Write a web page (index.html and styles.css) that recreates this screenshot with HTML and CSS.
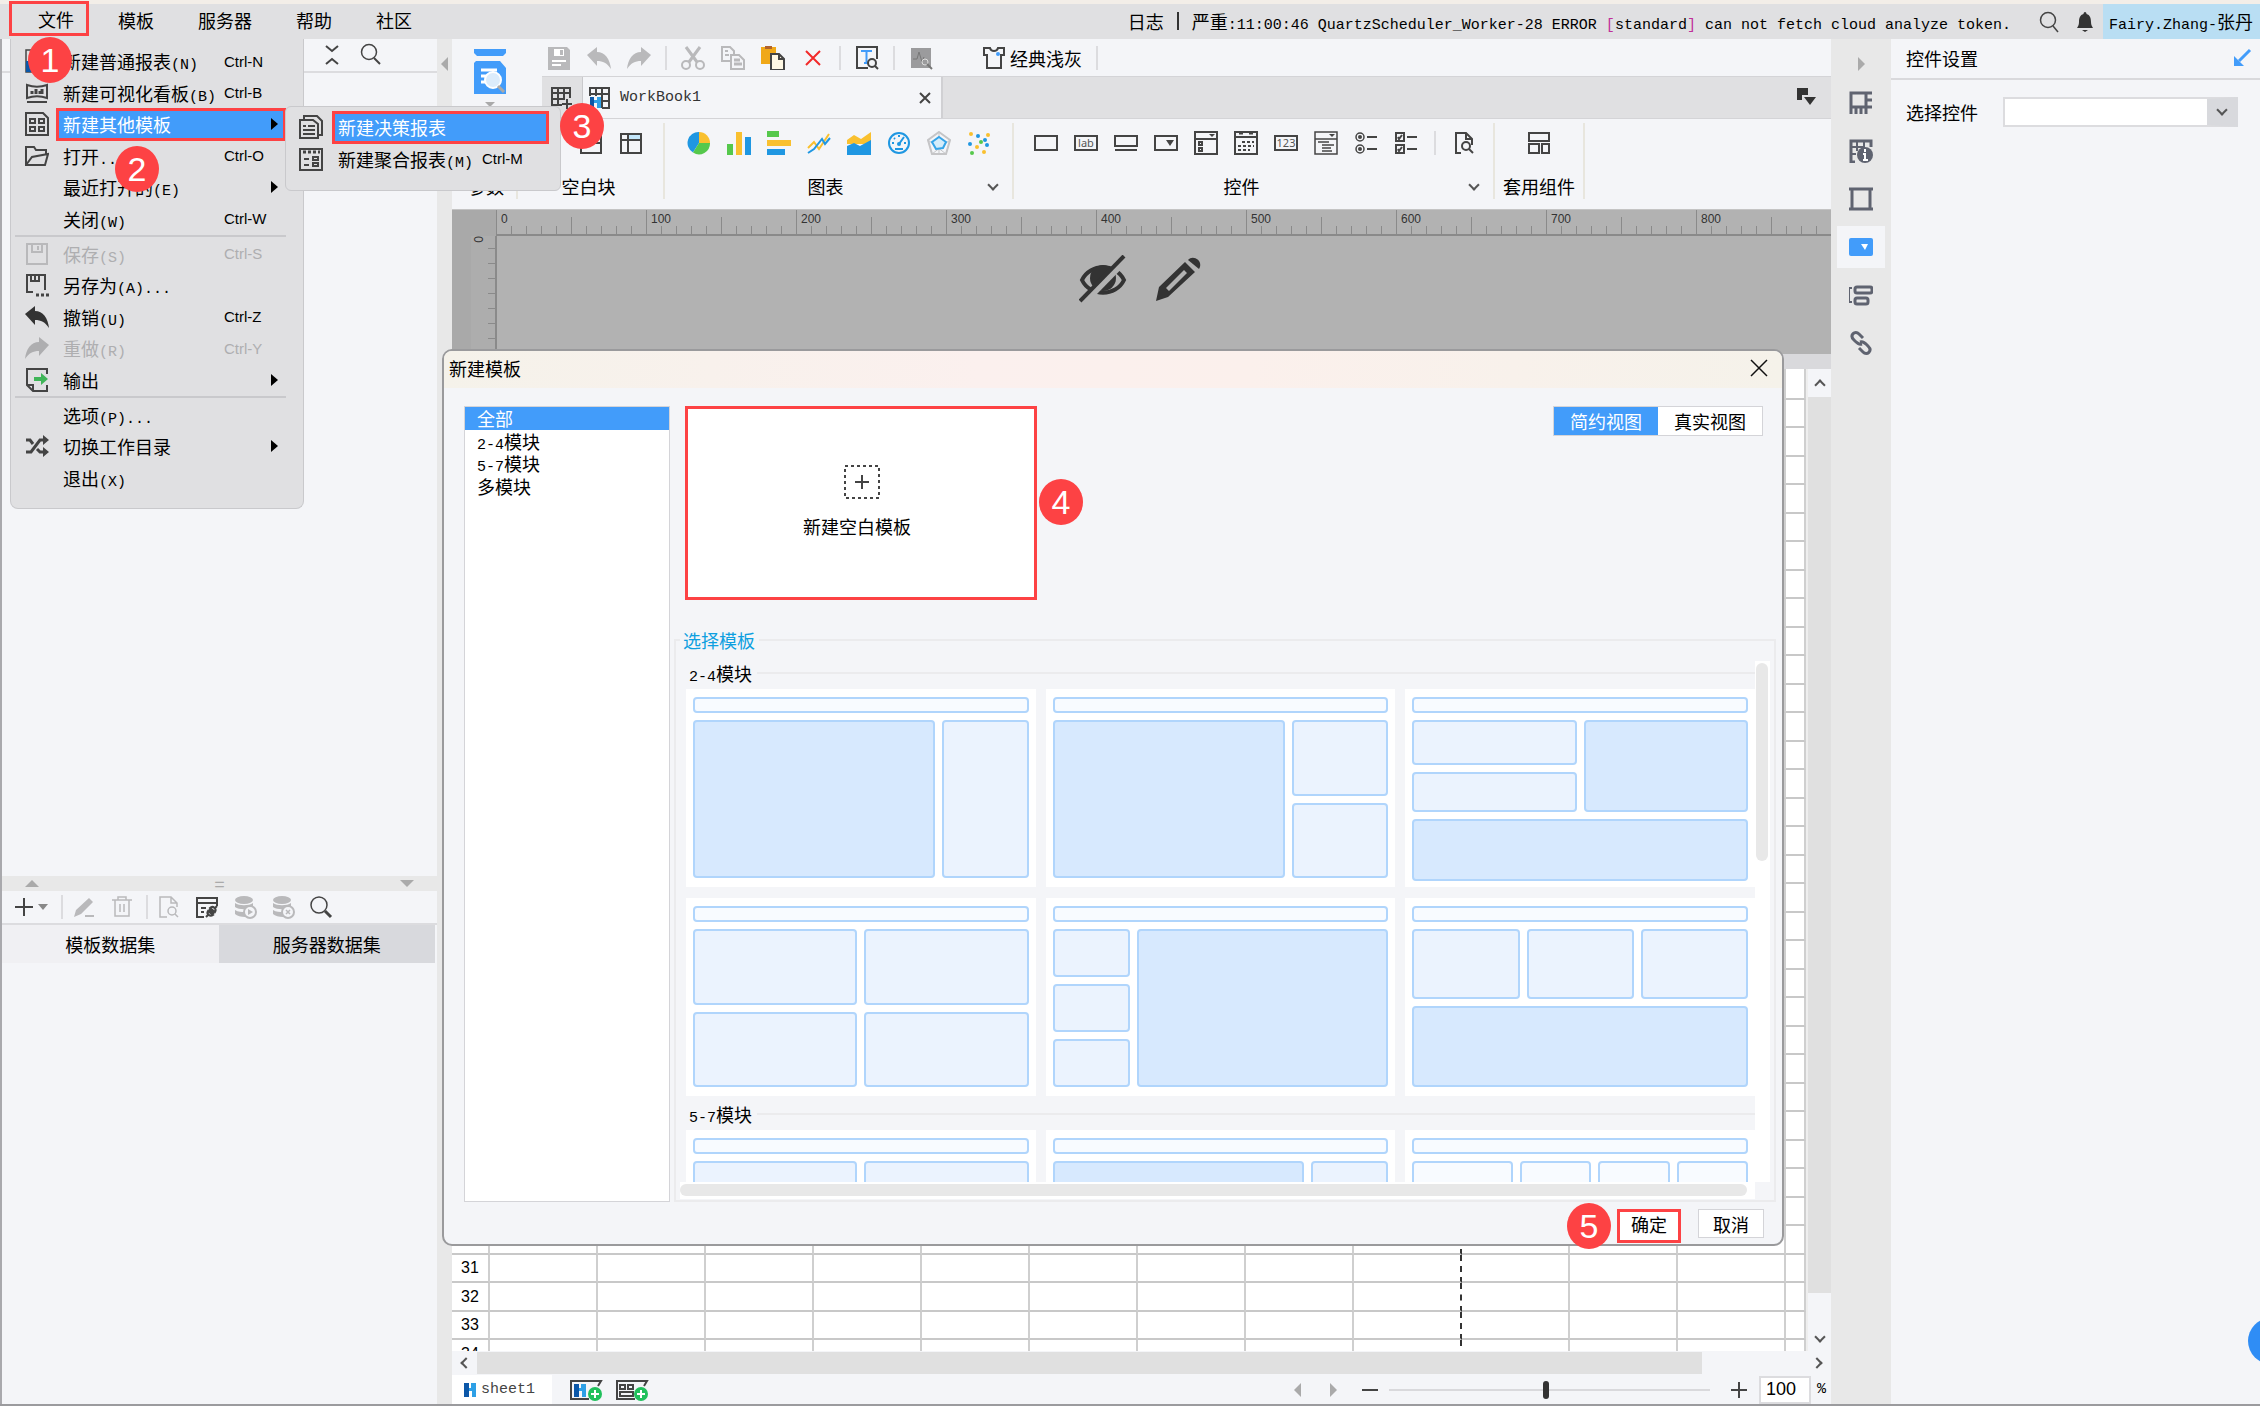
FILE: index.html
```html
<!DOCTYPE html>
<html lang="zh-CN">
<head>
  <meta charset="UTF-8" />
  <meta name="viewport" content="width=device-width, initial-scale=1.0"/>
  <title>WorkBook1</title>
  <link rel="stylesheet" href="styles.css">
</head>
<body>
  <header class="menubar">
    <nav class="menus">
      <button class="menu-open">文件</button>
      <button>模板</button>
      <button>服务器</button>
      <button>帮助</button>
      <button>社区</button>
    </nav>
    <div class="log">
      <span>日志</span>
      <span class="bar"></span>
      <span>严重<span class="mono">:11:00:46 QuartzScheduler_Worker-28 ERROR <span class="br">[</span>standard<span class="br">]</span> can not fetch cloud analyze token.</span></span>
    </div>
    <button class="plain" aria-label="搜索"><svg class="icon" viewBox="0 0 24 24"><circle cx="11" cy="10" r="7.5" class="l"/><path d="M16 16l5 6" class="l"/></svg></button>
    <button class="plain bell" aria-label="通知"><svg class="icon" viewBox="0 0 24 24"><path d="M12 2c1 0 1.500 1 1.500 2C17 5 18 8 18 12c0 3 1 4 2 6H4c1-2 2-3 2-6 0-4 1-7 4.500-8 0-1 .5-2 1.500-2z" fill="#333"/><path d="M9 20h6l-3 2z" fill="#333"/></svg></button>
    <button class="user"><span class="mono">Fairy.Zhang-</span>张丹</button>
  </header>

  <main class="workspace">
    <aside class="left">
      <div class="left-tools">
        <svg class="icon" viewBox="0 0 24 24"><path d="M6 3l6 5 6-5M6 21l6-5 6 5" class="l w2"/></svg>
        <svg class="icon" viewBox="0 0 24 24"><circle cx="10" cy="9" r="7.500" class="l"/><path d="M15 15l6 6" class="l w2"/></svg>
      </div>
      <div class="tree"></div>
      <div class="hsplit"><i class="tri up"></i><span>=</span><i class="tri down"></i></div>
      <div class="data-tools">
        <svg class="icon add" viewBox="0 0 36 24"><path d="M2 12h18M11 3v18" class="l w2"/><path d="M25 9h10l-5 6z" fill="#888"/></svg>
        <i class="sep"></i>
        <svg class="icon dim" viewBox="0 0 24 24"><path d="M2 22l2-7L17 3l4 4L9 19zM13 20h9v2h-9z" fill="#b9b9bb"/></svg>
        <svg class="icon dim" viewBox="0 0 24 24"><path d="M2 5h20M8 5V2h8v3M5 5v16h14V5M10 9v8M14 9v8" class="l"/></svg>
        <i class="sep"></i>
        <svg class="icon dim" viewBox="0 0 24 24"><path d="M10 22H3V2h11l6 6v4M14 2v6h6" class="l"/><circle cx="15" cy="16" r="4" class="l"/><path d="M18 19l3 3" class="l"/></svg>
        <svg class="icon" viewBox="0 0 24 24"><path d="M9 22H2V3h20v8M2 8h20M6 13h5M6 17h3" class="l w2"/><path d="M11 22l3-3M22 11l-3 3M14 14l5 5M15 13c3-3 7 1 5 4zM13 16c-2 3 2 6 5 4z" class="l w2"/></svg>
        <svg class="icon dim" viewBox="0 0 24 24"><ellipse cx="11" cy="5" rx="9" ry="4" fill="#b9b9bb"/><path d="M2 8c4 3 14 3 18 0v4c-4 3-14 3-18 0zM2 15c3 2 7 2 10 2v5c-4 0-8-1-10-3z" fill="#b9b9bb"/><circle cx="17" cy="17" r="6" fill="#f4f5f8" stroke="#b9b9bb" stroke-width="2"/><path d="M15 14l5 3-5 3z" fill="#b9b9bb"/></svg>
        <svg class="icon dim" viewBox="0 0 24 24"><ellipse cx="11" cy="5" rx="9" ry="4" fill="#b9b9bb"/><path d="M2 8c4 3 14 3 18 0v4c-4 3-14 3-18 0zM2 15c3 2 7 2 10 2v5c-4 0-8-1-10-3z" fill="#b9b9bb"/><circle cx="17" cy="17" r="6" fill="#f4f5f8" stroke="#b9b9bb" stroke-width="2"/><path d="M15 15l4 4M19 15l-4 4" class="l"/></svg>
        <svg class="icon" viewBox="0 0 24 24"><circle cx="10" cy="10" r="8" class="l"/><path d="M16 16l6 6" class="l w3"/></svg>
      </div>
      <div class="data-tabs">
        <button class="on">模板数据集</button>
        <button>服务器数据集</button>
      </div>
      <div class="data-list"></div>
    </aside>

    <div class="vsplit"><i class="tri left-tri"></i></div>

    <section class="center">
      <div class="top">
        <div class="preview">
          <svg viewBox="0 0 32 58"><path d="M0 0h32v4l-3 3H3L0 4z" fill="#429cfa"/><path d="M2 12h24l6 7v26H0V14z" fill="#429cfa"/><path d="M7 21h16M7 27h8M7 33h7" stroke="#fff" stroke-width="3"/><circle cx="19" cy="31" r="8" fill="#dcecfb" stroke="#fff" stroke-width="2"/><path d="M24 37l6 6" stroke="#aaa" stroke-width="3"/><path d="M11 53h10l-5 5z" fill="#aaa"/></svg>
        </div>
        <div class="top-rows">
          <div class="toolbar">
            <svg class="icon" viewBox="0 0 24 24"><path d="M1 1h19l3 3v20H1z" fill="#b9b9bb"/><path d="M7 3h10v7H7z" fill="#fff"/><path d="M13 4h3v5h-3z" fill="#b9b9bb"/><path d="M5 15h14M5 19h9" stroke="#fff" stroke-width="2"/></svg>
            <svg class="icon" viewBox="0 0 24 24"><path d="M0 9L10 1v5c8 0 13 7 14 17-4-6-8-8-14-8v5z" fill="#b9b9bb"/></svg>
            <svg class="icon" viewBox="0 0 24 24"><path d="M24 9L14 1v5C6 6 1 13 0 23c4-6 8-8 14-8v5z" fill="#b9b9bb"/></svg>
            <i class="sep"></i>
            <svg class="icon dim" viewBox="0 0 24 24"><path d="M5 1l11 15M19 1L8 16" class="l w3"/><circle cx="5" cy="19" r="4" class="l w2"/><circle cx="19" cy="19" r="4" class="l w2"/></svg>
            <svg class="icon dim" viewBox="0 0 24 24"><path d="M9 15H1V1h8l4 4v3M4 5h3M4 9h4" class="l w2"/><path d="M10 9h8l5 5v9H10z" class="l w2"/><path d="M13 14h6M13 18h8" class="l w3"/></svg>
            <svg class="icon" viewBox="0 0 24 24"><path d="M0 1h15v8H9v9H0z" fill="#f0a818"/><path d="M4 0h7v3H4z" fill="#b0622c"/><path d="M10 8h8l5 5v11H10z" fill="#fff8e4" stroke="#444" stroke-width="2"/><path d="M18 8v5h5" fill="none" stroke="#444" stroke-width="2"/></svg>
            <svg class="icon" viewBox="0 0 24 24"><path d="M5 5l14 14M19 5L5 19" stroke="#f22a2a" stroke-width="2"/></svg>
            <i class="sep"></i>
            <svg class="icon" viewBox="0 0 24 24"><path d="M13 22H2V1h20v12" class="l w2"/><path d="M6 5h11M11.500 5v12M9 17h5" stroke="#429cfa" stroke-width="2"/><circle cx="17" cy="17" r="4" class="l w2"/><path d="M20 20l3 3" class="l w2"/></svg>
            <i class="sep"></i>
            <svg class="icon" viewBox="0 0 24 24"><path d="M2 2h20v20H2z" fill="#9b9b9d"/><path d="M4 13h4l2-7 3 10 2-5" fill="none" stroke="#777"/><circle cx="16" cy="16" r="3" fill="none" stroke="#ddd"/><path d="M18 18l5 5" stroke="#777" stroke-width="2"/></svg>
            <button class="theme"><svg class="icon" viewBox="0 0 24 24"><path d="M2 2h6c1 4 7 4 8 0h6v7h-3v13H5V9H2z" class="l w2"/><circle cx="16" cy="8" r="2" fill="#429cfa"/></svg>经典浅灰</button>
            <i class="sep"></i>
          </div>
          <div class="tabs">
            <button class="new-tab" aria-label="新建"><svg class="icon" viewBox="0 0 24 24"><path d="M13 19H3V2h18v10M3 7h18M3 13h13M9 2v17M15 2v12M13 18h10M18 13v10" class="l w2"/></svg></button>
            <div class="tab">
              <svg class="icon" viewBox="0 0 24 24"><path d="M2 10V2h19v20h-7M2 8h19M8 2v8M14 2v20M14 15h7" class="l w2"/><path d="M2 11h4v11H2z" fill="#0b57a8"/><path d="M6 14h3v-3h4v11H9v-5H6z" fill="#2ea0e6"/></svg>
              <span class="mono">WorkBook1</span>
              <button class="plain" aria-label="关闭"><svg class="icon" viewBox="0 0 24 24"><path d="M7 7l10 10M17 7L7 17" class="l w2"/></svg></button>
            </div>
            <svg class="icon tab-list" viewBox="0 0 24 24"><path d="M3 3h11v7H8v5H3z" fill="#333"/><path d="M10 12h12l-6 8z" fill="#333"/></svg>
          </div>
        </div>
      </div>

      <div class="ribbon">
        <div class="group g-param"><div class="icons"></div><div class="name">参数</div></div>
        <div class="group g-blank">
          <div class="icons">
            <svg class="icon" viewBox="0 0 24 24"><path d="M2 2h20v20H2zM2 12h20" class="l w2"/></svg>
            <svg class="icon" viewBox="0 0 24 24"><path d="M9 4h12v6H9z" fill="#c3e6fa"/><path d="M2 3h20v19H2zM2 9h20M9 3v19" class="l w2"/></svg>
          </div>
          <div class="name">空白块</div>
        </div>
        <div class="group g-chart">
          <div class="icons">
            <svg class="icon" viewBox="0 0 24 24"><path d="M12 12V1A11 11 0 0 0 6 21.500z" fill="#1f97e2"/><path d="M12 12V1a11 11 0 0 1 11 11z" fill="#f9c02f"/><path d="M12 12h11A11 11 0 0 1 6 21.500z" fill="#55c84c"/></svg>
            <svg class="icon" viewBox="0 0 24 24"><path d="M0 13h6v11H0z" fill="#55c84c"/><path d="M9 1h6v23H9z" fill="#f9c02f"/><path d="M18 6h6v18h-6z" fill="#1f97e2"/></svg>
            <svg class="icon" viewBox="0 0 24 24"><path d="M0 0h12v6H0z" fill="#55c84c"/><path d="M0 9h24v6H0z" fill="#f9c02f"/><path d="M0 18h18v6H0z" fill="#1f97e2"/></svg>
            <svg class="icon" viewBox="0 0 24 24"><path d="M1 17l6-6 5 7L22 3" fill="none" stroke="#f9c02f" stroke-width="2"/><path d="M1 22l6-4 8-10 3 5 5-6" fill="none" stroke="#1f97e2" stroke-width="2"/></svg>
            <svg class="icon" viewBox="0 0 24 24"><path d="M0 9l7-5 7 4 10-7v12H0z" fill="#f9c02f"/><path d="M0 15l7-3 6 3 11-6v15H0z" fill="#1f97e2"/></svg>
            <svg class="icon" viewBox="0 0 24 24"><circle cx="12" cy="12" r="10" fill="none" stroke="#1f97e2" stroke-width="2"/><path d="M12 13l5-7M5 12h2M17 12h2M12 4v2M7 7l1 1M8 18h8" stroke="#1f97e2" stroke-width="2"/><circle cx="12" cy="13" r="2" fill="#1f97e2"/></svg>
            <svg class="icon" viewBox="0 0 24 24"><path d="M12 1l11 8-4 14H5L1 9zM12 1v22M1 9l18 14M23 9L5 23" fill="none" stroke="#c5c5c7"/><path d="M12 1l11 8-4 14H5L1 9z" fill="none" stroke="#c5c5c7" stroke-width="2"/><path d="M12 6l7 5-3 6-7 1-4-7z" fill="#d4ecfa" stroke="#35a4e8" stroke-width="2"/></svg>
            <svg class="icon" viewBox="0 0 24 24"><g fill="#f9c02f"><circle cx="4" cy="3" r="2"/><circle cx="21" cy="4" r="2"/><circle cx="10" cy="16" r="2"/><circle cx="17" cy="21" r="2"/></g><g fill="#1f97e2"><circle cx="11" cy="5" r="2"/><circle cx="18" cy="9" r="2"/><circle cx="3" cy="13" r="2"/><circle cx="20" cy="14" r="2"/></g><g fill="#55c84c"><circle cx="14" cy="11" r="2"/><circle cx="5" cy="22" r="2"/></g></svg>
          </div>
          <div class="name">图表<i class="chev"></i></div>
        </div>
        <div class="group g-widget">
          <div class="icons">
            <svg class="icon" viewBox="0 0 24 24"><path d="M1 5h22v14H1z" class="l w2"/></svg>
            <svg class="icon" viewBox="0 0 24 24"><path d="M1 5h22v14H1z" class="l w2"/><text x="12" y="16" class="t">lab</text></svg>
            <svg class="icon" viewBox="0 0 24 24"><path d="M1 5h22v10H1zM1 19h22" class="l w2"/></svg>
            <svg class="icon" viewBox="0 0 24 24"><path d="M1 5h22v14H1z" class="l w2"/><path d="M12 9h8l-4 6z" fill="#444"/></svg>
            <svg class="icon" viewBox="0 0 24 24"><path d="M1 1h22v22H1zM1 8h22M5 11h3v3H5zM5 17h3v3H5z" class="l w2"/><path d="M15 3h6l-3 3z" fill="#444"/></svg>
            <svg class="icon" viewBox="0 0 24 24"><path d="M1 1h22v22H1zM1 6h22" class="l w2"/><path d="M5 2h4M15 2h4" class="l w3"/><path d="M8 11h12M4 15h16M4 19h12" class="l w2" stroke-dasharray="3 2"/></svg>
            <svg class="icon" viewBox="0 0 24 24"><path d="M1 5h22v14H1z" class="l w2"/><text x="12" y="16" class="t">123</text></svg>
            <svg class="icon" viewBox="0 0 24 24"><path d="M1 1h22v22H1zM1 8h22M4 11h11M8 14h12M8 17h9M8 20h10" class="l"/><path d="M15 3h6l-3 3z" fill="#444"/></svg>
            <svg class="icon" viewBox="0 0 24 24"><circle cx="6" cy="6" r="4" class="l"/><circle cx="6" cy="6" r="2" fill="#444"/><circle cx="6" cy="18" r="4" class="l"/><circle cx="6" cy="18" r="2" fill="#444"/><path d="M13 6h10M13 18h10" class="l w2"/></svg>
            <svg class="icon" viewBox="0 0 24 24"><path d="M2 2h8v8H2zM2 14h8v8H2zM4 6l1 2 3-4M4 18l1 2 3-4M13 6h10M13 18h10" class="l w2"/></svg>
            <i class="sep"></i>
            <svg class="icon" viewBox="0 0 24 24"><path d="M9 22H4V2h10l6 6v6M14 2v6h6" class="l w2"/><circle cx="14" cy="15" r="4" class="l w2"/><path d="M17 18l4 4" class="l w2"/></svg>
          </div>
          <div class="name">控件<i class="chev"></i></div>
        </div>
        <div class="group g-suite">
          <div class="icons"><svg class="icon" viewBox="0 0 24 24"><path d="M2 2h20v8H2zM2 13h10v9H2zM15 13h7v9h-7z" class="l w2"/></svg></div>
          <div class="name">套用组件</div>
        </div>
      </div>

      <div class="ruler">
        <div class="ruler-scale"><span>0</span><span>100</span><span>200</span><span>300</span><span>400</span><span>500</span><span>600</span><span>700</span><span>800</span></div>
      </div>
      <div class="canvas">
        <div class="vruler"><span>0</span></div>
        <div class="canvas-icons">
          <svg viewBox="0 0 48 48"><path d="M3 25c8-17 34-17 42 0-8 17-34 17-42 0z" fill="none" stroke="#333" stroke-width="4"/><path d="M24 10a13 13 0 1 1 0 26 13 13 0 1 1 0-26z" fill="#333"/><path d="M5 48L49 3" stroke="#b2b2b2" stroke-width="6"/><path d="M1 46L45 1" stroke="#333" stroke-width="4"/></svg>
          <svg viewBox="0 0 48 48"><path d="M2 46l3-14L31 7l10 10-27 25zM12 33l3 3 18-18-3-3z" fill="#333" fill-rule="evenodd"/><path d="M34 5c5-6 16 1 11 9z" fill="#333"/></svg>
        </div>
      </div>
      <div class="sheet">
        <div class="grid-wrap"><table class="grid"><colgroup id="cols"></colgroup><tbody id="rows"></tbody></table></div>
        <div class="vscroll"><i class="chev up-chev"></i><div class="thumb"></div><i class="chev"></i></div>
      </div>
      <div class="hscroll"><i class="chev l-chev"></i><div class="thumb"></div><i class="chev r-chev"></i></div>
      <footer class="status">
        <button class="sheet-tab"><svg viewBox="0 0 14 14"><path d="M1 0h5v14H1z" fill="#0b57a8"/><path d="M6 5h2V0h5v14H9V8H6z" fill="#2ea0e6"/></svg><span class="mono">sheet1</span></button>
        <svg class="add-sheet" viewBox="0 0 34 24"><path d="M20 21H2V3h30l-3 5" class="l w2"/><path d="M5 6h5v13H5z" fill="#0b57a8"/><path d="M10 10h2V6h5v13h-4v-6h-3z" fill="#2ea0e6"/><circle cx="26" cy="16" r="7" fill="#21c05c"/><path d="M22 16h8M26 12v8" stroke="#fff" stroke-width="2"/></svg>
        <svg class="add-sheet" viewBox="0 0 34 24"><path d="M20 21H2V3h30l-3 5M5 7h5v4H5zM13 7h5v4h-5zM5 14h13v4H5z" class="l w2"/><circle cx="26" cy="16" r="7" fill="#21c05c"/><path d="M22 16h8M26 12v8" stroke="#fff" stroke-width="2"/></svg>
        <div class="zoom">
          <i class="tri left-tri"></i><i class="tri right-tri"></i>
          <button class="plain" aria-label="缩小"><svg class="icon" viewBox="0 0 24 24"><path d="M4 12h16" class="l w2"/></svg></button>
          <input type="range" min="0" max="100" value="49" aria-label="缩放">
          <button class="plain" aria-label="放大"><svg class="icon" viewBox="0 0 24 24"><path d="M4 12h16M12 4v16" class="l w2"/></svg></button>
          <input type="text" value="100" id="zoom"><label for="zoom" class="mono">%</label>
        </div>
      </footer>
    </section>

    <nav class="rail">
      <i class="tri right-tri"></i>
      <button aria-label="单元格元素"><svg class="icon" viewBox="0 0 24 24"><path d="M2 23V2h21M2 16h21M17 2v21M17 9h6M7 16v7M12 16v7" class="r"/></svg></button>
      <button aria-label="单元格属性"><svg class="icon" viewBox="0 0 24 24"><path d="M6 23H2V2h20v6" class="r"/><path d="M1 8h15M8 2v10M15 2v6M1 15h6" class="r w2"/><circle cx="16" cy="16" r="8" fill="#5f6370"/><path d="M16 10v3M14 15h2v6M14 21h5" stroke="#fff" stroke-width="2" fill="none"/></svg></button>
      <button aria-label="悬浮元素"><svg class="icon" viewBox="0 0 24 24"><path d="M3 2h18v20H3zM0 2h4M20 2h4M0 22h4M20 22h4" class="r"/></svg></button>
      <button class="on" aria-label="控件设置"><svg class="icon" viewBox="0 0 24 24"><rect x="0" y="3" width="24" height="18" rx="2" fill="#429cfa"/><path d="M12 9h7l-3 6z" fill="#fff"/></svg></button>
      <button aria-label="条件属性"><svg class="icon" viewBox="0 0 24 24"><path d="M3 5H0v14h3" class="r w2"/><rect x="6" y="4" width="17" height="6" rx="2" class="r"/><rect x="6" y="15" width="13" height="6" rx="2" class="r"/></svg></button>
      <button aria-label="超级链接"><svg class="icon" viewBox="0 0 24 24"><path d="M13 13c-3 1-5-1-8-4-5-5 1-10 5-6l4 4M11 11c3-1 5 1 8 4 5 5-1 10-5 6l-4-4" class="r"/></svg></button>
    </nav>

    <aside class="props">
      <div class="props-head"><span>控件设置</span><svg class="icon" viewBox="0 0 24 24"><path d="M20 4L9 15" stroke="#429cfa" stroke-width="3"/><path d="M4 10v10h10z" fill="#429cfa"/></svg></div>
      <div class="field">
        <label for="widget">选择控件</label>
        <div class="select"><select id="widget"><option></option></select><i class="chev"></i></div>
      </div>
    </aside>
  </main>

  <!-- file menu -->
  <ul class="menu file-menu">
    <li><svg class="icon" viewBox="0 0 24 24"><path d="M1 1h22v22H1z" class="l"/><path d="M1 12h10v11H1z" fill="#0b57a8"/></svg><button class="row"><span>新建普通报表<span class="mono">(N)</span></span><kbd>Ctrl-N</kbd></button></li>
    <li><svg class="icon" viewBox="0 0 24 24"><path d="M2 4c6 2 14 2 20 0v13c-6-2-14-2-20 0zM2 21h20" class="l w2"/><path d="M7 10v3M11 8v5M15 10v3M17 8v5" class="l w3"/></svg><button class="row"><span>新建可视化看板<span class="mono">(B)</span></span><kbd>Ctrl-B</kbd></button></li>
    <li><svg class="icon" viewBox="0 0 24 24"><path d="M1 1h17l5 5v17H1zM5 7h5v4H5zM14 7h5v4h-5zM5 15h5v4H5zM14 15h5v4h-5z" class="l w2"/></svg><button class="row on"><span>新建其他模板</span><i class="tri sub"></i></button></li>
    <li><svg class="icon" viewBox="0 0 24 24"><path d="M1 21V3h8l2 3h10v4M1 21l6-8 16-3-3 11z" class="l w2"/></svg><button class="row"><span>打开<span class="mono">...</span></span><kbd>Ctrl-O</kbd></button></li>
    <li><i class="icon"></i><button class="row"><span>最近打开的<span class="mono">(E)</span></span><i class="tri sub"></i></button></li>
    <li><i class="icon"></i><button class="row"><span>关闭<span class="mono">(W)</span></span><kbd>Ctrl-W</kbd></button></li>
    <li class="rule"></li>
    <li><svg class="icon dim" viewBox="0 0 24 24"><path d="M2 2h20v20H2zM7 2v8h10V2M13 4v4" class="l w2"/></svg><button class="row" disabled><span>保存<span class="mono">(S)</span></span><kbd>Ctrl-S</kbd></button></li>
    <li><svg class="icon" viewBox="0 0 24 24"><path d="M8 19H2V2h18v15M6 2v6h8V2M10 3v4" class="l w2"/><path d="M11 22h3M16 22h3M21 22h3" class="l w3"/></svg><button class="row"><span>另存为<span class="mono">(A)...</span></span></button></li>
    <li><svg class="icon" viewBox="0 0 24 24"><path d="M0 9L10 1v5c8 0 13 7 14 17-4-6-8-8-14-8v5z" fill="#333"/></svg><button class="row"><span>撤销<span class="mono">(U)</span></span><kbd>Ctrl-Z</kbd></button></li>
    <li><svg class="icon" viewBox="0 0 24 24"><path d="M24 9L14 1v5C6 6 1 13 0 23c4-6 8-8 14-8v5z" fill="#aeaeb0"/></svg><button class="row" disabled><span>重做<span class="mono">(R)</span></span><kbd>Ctrl-Y</kbd></button></li>
    <li><svg class="icon" viewBox="0 0 24 24"><path d="M22 6V1H2v16l6 6h14v-6M2 17h6v6" class="l w2"/><path d="M9 9h7V5l7 6-7 6v-4H9z" fill="#3fb558"/></svg><button class="row"><span>输出</span><i class="tri sub"></i></button></li>
    <li class="rule"></li>
    <li><i class="icon"></i><button class="row"><span>选项<span class="mono">(P)...</span></span></button></li>
    <li><svg class="icon" viewBox="0 0 24 24"><path d="M1 6h4l3 4M1 18h5L15 6h4M12 15l3 3h4" class="l w3"/><path d="M18 1l6 5-6 5zM18 13l6 5-6 5z" fill="#444"/></svg><button class="row"><span>切换工作目录</span><i class="tri sub"></i></button></li>
    <li><i class="icon"></i><button class="row"><span>退出<span class="mono">(X)</span></span></button></li>
  </ul>

  <ul class="menu sub-menu">
    <li><svg class="icon" viewBox="0 0 24 24"><path d="M5 4V1h13l5 5v14h-3M1 5h13l5 4v14H1z" class="l w2"/><path d="M4 11h3M9 11h7M4 15h12M4 19h12" class="l w2"/></svg><button class="row on"><span>新建决策报表</span></button></li>
    <li><svg class="icon" viewBox="0 0 24 24"><path d="M1 2h22v21H1z" class="l w2"/><path d="M4 5h17" class="l w3" stroke-dasharray="3 2"/><path d="M5 12h5M5 18h5M14 10h5v3h-5zM14 16h5v3h-5z" class="l w2"/></svg><button class="row"><span>新建聚合报表<span class="mono">(M)</span></span><kbd>Ctrl-M</kbd></button></li>
  </ul>

  <div class="dialog" role="dialog" aria-label="新建模板">
    <div class="dialog-title"><span>新建模板</span><button class="plain" aria-label="关闭"><svg class="icon" viewBox="0 0 24 24"><path d="M4 4l16 16M20 4L4 20" stroke="#111" stroke-width="1.500"/></svg></button></div>
    <div class="dialog-body">
      <ul class="list">
        <li class="on">全部</li>
        <li><span class="mono">2-4</span>模块</li>
        <li><span class="mono">5-7</span>模块</li>
        <li>多模块</li>
      </ul>
      <div class="pane">
        <div class="pane-top">
          <button class="blank">
            <svg viewBox="0 0 36 34"><path d="M1 1h34v32H1z" fill="none" stroke="#444" stroke-width="2" stroke-dasharray="3 3"/><path d="M11 17h14M18 10v14" stroke="#444" stroke-width="2"/></svg>
            新建空白模板
          </button>
          <div class="toggle"><button class="on">简约视图</button><button>真实视图</button></div>
        </div>
        <fieldset class="templates">
          <legend>选择模板</legend>
          <div class="scroller">
            <div class="viewport">
              <h3><span><span class="mono">2-4</span>模块</span></h3>
              <div class="cards">
                <div class="card"><b class="bar-cell"></b><div class="cells c1"><b class="main"></b><b></b></div></div>
                <div class="card"><b class="bar-cell"></b><div class="cells c2"><b class="main"></b><b></b><b></b></div></div>
                <div class="card tall"><b class="bar-cell"></b><div class="cells c3"><b></b><b class="main"></b><b></b><b class="main"></b></div></div>
                <div class="card"><b class="bar-cell"></b><div class="cells c4"><b></b><b></b><b></b><b></b></div></div>
                <div class="card"><b class="bar-cell"></b><div class="cells c5"><b></b><b class="main"></b><b></b><b></b></div></div>
                <div class="card"><b class="bar-cell"></b><div class="cells c6"><b></b><b></b><b></b><b class="main"></b></div></div>
              </div>
              <h3><span><span class="mono">5-7</span>模块</span></h3>
              <div class="cards">
                <div class="card"><b class="bar-cell"></b><div class="cells c4"><b></b><b></b><b></b><b></b></div></div>
                <div class="card"><b class="bar-cell"></b><div class="cells c7"><b class="main"></b><b></b></div></div>
                <div class="card"><b class="bar-cell"></b><div class="cells c8"><b class="pale"></b><b class="pale"></b><b class="pale"></b><b class="pale"></b></div></div>
              </div>
            </div>
            <div class="sv"><div></div></div>
            <div class="sh"><div></div></div>
          </div>
        </fieldset>
      </div>
    </div>
    <div class="dialog-foot">
      <button class="ok">确定</button>
      <button>取消</button>
    </div>
  </div>

  <span class="badge b1">1</span>
  <span class="badge b2">2</span>
  <span class="badge b3">3</span>
  <span class="badge b4">4</span>
  <span class="badge b5">5</span>
  <span class="bubble"></span>

  <script>
    const cols = document.getElementById('cols');
    const rows = document.getElementById('rows');
    const colCount = 13;

    cols.innerHTML = '<col class="col-head">' + '<col class="col-cell">'.repeat(colCount - 1) + '<col>';

    // first row is the column header, the last column is only partly in view
    let html = '<tr><th></th>';
    for (let c = 0; c < colCount; c++) {
      html += `<th>${c < colCount - 1 ? String.fromCharCode(65 + c) : ''}</th>`;
    }
    html += '</tr>';
    for (let r = 1; r <= 34; r++) {
      html += `<tr><th>${r}</th>${'<td></td>'.repeat(colCount)}</tr>`;
    }
    rows.innerHTML = html;
  </script>
</body>
</html>
```
FILE: styles.css
```css
* {
  box-sizing: border-box;
}

body {
  margin: 0;
  height: 100vh;
  overflow: hidden;
  position: relative;
  display: flex;
  flex-direction: column;
  font-family: "Noto Sans CJK SC", sans-serif;
  font-size: 18px;
  line-height: 24px;
  color: #000;
  background: #f4f5f8;
  border-bottom: 2px solid #9b9b9e;
}

button {
  font: inherit;
  color: inherit;
  background: none;
  border: none;
  padding: 0;
  white-space: nowrap;
}

ul {
  list-style: none;
  margin: 0;
  padding: 0;
}

.mono {
  font-family: "Liberation Mono", monospace;
  font-size: 15px;
  line-height: 1;
}

.icon {
  width: 24px;
  height: 24px;
  flex: none;
  display: block;
}

.l {
  fill: none;
  stroke: #444;
  stroke-width: 1.5;
}

.dim .l { stroke: #b9b9bb; }

.r {
  fill: none;
  stroke: #5f6370;
  stroke-width: 3;
}

.w2 { stroke-width: 2; }
.w3 { stroke-width: 3; }

.t {
  font: 11px "Noto Sans", sans-serif;
  fill: #555;
  text-anchor: middle;
}

.sep {
  width: 2px;
  height: 24px;
  flex: none;
  background: #dcdcdf;
}

/* small triangles and chevrons */
.tri {
  width: 0;
  height: 0;
  flex: none;
  border: 7px solid transparent;
}

.up { border-top: 0; border-bottom-color: #aaa; }
.down { border-bottom: 0; border-top-color: #aaa; }
.left-tri { border-left: 0; border-right-color: #aaa; }
.right-tri { border-right: 0; border-left-color: #aaa; }
.sub { border-width: 6px 0 6px 7px; border-left-color: #000; }

.chev {
  width: 8px;
  height: 8px;
  flex: none;
  border: solid #555;
  border-width: 0 2px 2px 0;
  transform: rotate(45deg);
}

.up-chev { transform: rotate(225deg); }
.l-chev { transform: rotate(135deg); }
.r-chev { transform: rotate(-45deg); }

/* menu bar */
.menubar {
  height: 39px;
  flex: none;
  display: flex;
  align-items: stretch;
  background: #e0e0e2;
  border-top: 4px solid #f3eee8;
}

.menus {
  display: flex;
  flex: 1;
  padding-left: 9px;
}

.menus button {
  padding: 0 22px 3px;
}

.menus .menu-open {
  height: 35px;
  margin: -3px 7px 0 0;
  padding: 0 12px 0 26px;
  border: 3px solid #fd4244;
}

.log {
  display: flex;
  align-items: center;
  gap: 11px;
  margin-right: 26px;
  padding-bottom: 2px;
  white-space: nowrap;
}

.log .bar {
  width: 2px;
  height: 18px;
  margin: 0 2px;
  background: #333;
}

.log .br { color: #c0309a; }

.bell { margin: 0 6px 0 12px; }

.user {
  padding: 0 7px 2px 6px;
  background: #b9def3;
}

/* workspace columns */
.workspace {
  flex: 1;
  min-height: 0;
  display: flex;
  border-left: 2px solid #a9a9ad;
}

.left {
  width: 435px;
  display: flex;
  flex-direction: column;
}

.left-tools {
  height: 34px;
  display: flex;
  justify-content: flex-end;
  align-items: center;
  gap: 15px;
  padding-right: 54px;
  border-bottom: 2px solid #dcdcdf;
}

.tree {
  flex: 1;
}

.hsplit {
  height: 15px;
  display: flex;
  align-items: center;
  justify-content: space-between;
  padding: 0 23px;
  background: #e8e8e8;
  color: #aaa;
  line-height: 15px;
}

.data-tools {
  height: 34px;
  display: flex;
  align-items: center;
  gap: 14px;
  padding-left: 11px;
  border-bottom: 2px solid #dcdcdf;
}

.data-tools .add { width: 36px; }
.data-tools .sep { margin: 0 -5px 0 -2px; }

.data-tabs {
  display: flex;
  height: 38px;
  padding-right: 2px;
}

.data-tabs button {
  flex: 1;
  background: #d8d9dd;
}

.data-tabs .on { background: #f0f0f3; }

.data-list {
  height: 441px;
}

.vsplit {
  width: 15px;
  display: flex;
  align-items: flex-start;
  padding: 18px 0 0 4px;
  background: #e8e8e8;
}

.center {
  flex: 1;
  min-width: 0;
  display: flex;
  flex-direction: column;
}

/* toolbar and workbook tabs */
.top {
  display: flex;
  height: 80px;
}

.preview {
  width: 90px;
  padding: 10px 0 0 22px;
}

.preview svg {
  width: 32px;
  height: 58px;
}

.top-rows {
  flex: 1;
}

.toolbar {
  height: 37px;
  display: flex;
  align-items: center;
  gap: 16px;
  padding-left: 5px;
}

.toolbar .sep { margin: 0 -2px; }

.theme {
  display: flex;
  align-items: center;
  gap: 4px;
  margin-left: 33px;
}

.tabs {
  height: 43px;
  display: flex;
  align-items: stretch;
  background: #e0e0e2;
  border-top: 1px solid #d4d4d7;
  border-bottom: 1px solid #d4d4d7;
}

.new-tab {
  padding: 0 9px 0 7px;
  border-right: 1px solid #c9c9cc;
}

.tab {
  width: 360px;
  display: flex;
  align-items: center;
  gap: 8px;
  padding: 0 4px 0 5px;
  background: #f4f5f8;
  border-right: 2px solid #d0d0d3;
  color: #333;
}

.tab .mono { flex: 1; }

.tab-list {
  margin: 8px 13px 0 auto;
}

/* ribbon */
.ribbon {
  display: flex;
  height: 90px;
  padding: 4px 0 10px;
}

.group {
  display: flex;
  flex-direction: column;
  border-right: 2px solid #e8e6de;
}

.icons {
  height: 40px;
  display: flex;
  align-items: center;
  justify-content: center;
  gap: 16px;
}

.name {
  flex: 1;
  position: relative;
  text-align: center;
  padding-top: 11px;
}

.name .chev {
  position: absolute;
  right: 15px;
  top: 18px;
}

.g-param { width: 66px; padding-left: 4px; }
.g-blank { width: 147px; }
.g-blank .icons { justify-content: flex-end; padding-right: 20px; }
.g-blank .name { padding-right: 4px; }
.g-chart { width: 349px; }
.g-chart .name { padding-right: 26px; }
.g-widget { width: 481px; }
.g-widget .icons { padding-left: 3px; }
.g-widget .name { padding-right: 24px; }
.g-suite { width: 90px; }

/* ruler and canvas */
.ruler {
  height: 27px;
  flex: none;
  display: flex;
  padding-left: 44px;
  background: #a9a9a9;
  border-top: 1px solid #c4c4c4;
}

.ruler-scale {
  flex: 1;
  display: flex;
  overflow: hidden;
  border-bottom: 2px solid #8a8a8a;
  font: 12px/19px "Liberation Sans", sans-serif;
  color: #333;
  background:
    repeating-linear-gradient(90deg, #8a8a8a 0 1px, transparent 1px 150px),
    repeating-linear-gradient(90deg, #8a8a8a 0 1px, transparent 1px 75px) 0 100% / 100% 17px no-repeat,
    repeating-linear-gradient(90deg, #8a8a8a 0 1px, transparent 1px 15px) 0 100% / 100% 8px no-repeat,
    #b2b2b2;
}

.ruler-scale span {
  width: 150px;
  flex: none;
  padding-left: 5px;
}

.canvas {
  height: 118px;
  flex: none;
  display: flex;
  background: #b2b2b2;
  border-left: 19px solid #a9a9a9;
}

.vruler {
  width: 26px;
  border-right: 2px solid #8a8a8a;
  font: 12px/14px "Liberation Sans", sans-serif;
  color: #333;
  background:
    repeating-linear-gradient(180deg, transparent 0 12px, #8a8a8a 12px 13px, transparent 13px 15px) 100% 0 / 7px 100% no-repeat,
    #adadad;
}

.vruler span {
  display: block;
  width: 14px;
  writing-mode: vertical-rl;
}

.canvas-icons {
  flex: 1;
  display: flex;
  justify-content: center;
  gap: 27px;
  padding: 19px 47px 0 0;
}

.canvas-icons svg {
  width: 48px;
  height: 48px;
}

/* sheet */
.sheet {
  flex: 1;
  min-height: 0;
  display: flex;
  border-top: 15px solid #d9d9dc;
}

.grid-wrap {
  flex: 1;
  overflow: hidden;
  background: #fff;
}

.grid {
  width: 100%;
  table-layout: fixed;
  border-collapse: separate;
  border-spacing: 0;
}

.col-head { width: 38px; }
.col-cell { width: 108px; }

.grid th,
.grid td {
  height: 28px;
  padding: 0;
  border-right: 2px solid #cfcfcf;
  border-bottom: 2px solid #c8c8c8;
  font: 16px/24px "Liberation Sans", sans-serif;
}

.grid tr:nth-child(odd) th,
.grid tr:nth-child(odd) td {
  height: 29px;
}

.grid tr:first-child th {
  height: 31px;
}

.grid td:nth-child(10) {
  border-right: 2px dashed #333;
}

.vscroll {
  width: 25px;
  display: flex;
  flex-direction: column;
  align-items: center;
  padding: 12px 0 10px;
  border-left: 2px solid #eee;
}

.vscroll .thumb {
  flex: 1;
  width: 23px;
  margin: 8px 0 40px;
  background: #e0e0e0;
}

.hscroll {
  height: 24px;
  flex: none;
  display: flex;
  align-items: center;
  padding: 0 10px;
}

.hscroll .thumb {
  flex: 1;
  height: 22px;
  margin: 0 111px 0 7px;
  background: #e0e0e0;
}

/* status bar */
.status {
  height: 29px;
  flex: none;
  display: flex;
  align-items: center;
  gap: 12px;
}

.sheet-tab {
  width: 100px;
  height: 29px;
  margin-right: 5px;
  display: flex;
  align-items: center;
  gap: 4px;
  padding-left: 11px;
  background: #fff;
  color: #444;
}

.sheet-tab svg {
  width: 14px;
  height: 14px;
}

.add-sheet {
  width: 34px;
  height: 24px;
}

.zoom {
  margin-left: auto;
  display: flex;
  align-items: center;
}

.zoom .tri { margin-right: 29px; }
.zoom .tri + .tri { margin-right: 21px; }

.zoom input[type="range"] {
  appearance: none;
  width: 321px;
  height: 24px;
  margin: 0 17px 0 7px;
  background: linear-gradient(#d9d9dc, #d9d9dc) 0 50% / 100% 2px no-repeat;
}

.zoom input[type="range"]::-webkit-slider-thumb {
  appearance: none;
  width: 6px;
  height: 18px;
  border-radius: 3px;
  background: #333;
}

.zoom input[type="text"] {
  width: 52px;
  height: 28px;
  margin-left: 8px;
  padding: 0 5px;
  border: 2px solid #dcdcdf;
  background: #fff;
  font: 18px "Liberation Sans", sans-serif;
}

.zoom label {
  width: 20px;
  padding-left: 6px;
}

/* right rail and properties */
.rail {
  width: 60px;
  display: flex;
  flex-direction: column;
  align-items: center;
  padding-top: 18px;
  background: #e8e8e8;
}

.rail .tri { margin-bottom: 11px; }

.rail button {
  width: 48px;
  height: 42px;
  margin-bottom: 6px;
  padding: 0 12px;
}

.rail .on { background: #f4f5f8; }

.props {
  width: 369px;
}

.props-head {
  height: 41px;
  display: flex;
  align-items: center;
  justify-content: space-between;
  padding: 0 6px 2px 15px;
  border-bottom: 2px solid #d9d9dc;
}

.field {
  display: flex;
  align-items: center;
  gap: 25px;
  padding: 17px 22px 0 15px;
}

.select {
  flex: 1;
  position: relative;
}

.select select {
  appearance: none;
  display: block;
  width: 100%;
  height: 30px;
  border: 2px solid #dcdcdf;
  border-right: 31px solid #d8d9dd;
  border-radius: 0;
  background: #fff;
}

.select .chev {
  position: absolute;
  right: 12px;
  top: 9px;
}

/* pop-up menus */
.menu {
  position: absolute;
  background: #e0e0e2;
  border: 1px solid #c9c9cc;
}

.menu li {
  height: 32px;
  display: flex;
  align-items: center;
}

.menu li:nth-child(even) { height: 31px; }

.menu .row {
  height: 33px;
  display: flex;
  align-items: center;
  justify-content: space-between;
  border: 3px solid transparent;
  padding-left: 4px;
  text-align: left;
}

.menu .row:disabled { color: #aeaeb0; }

.menu .row.on {
  color: #fff;
  background: #429cfa;
  border-color: #fd4244;
}

.menu .tri { margin-right: 5px; }

kbd {
  font: 15px "Liberation Sans", sans-serif;
  width: 59px;
}

.file-menu {
  left: 10px;
  top: 39px;
  width: 294px;
  padding: 6px 0 15px 14px;
  border-top: 0;
  border-radius: 0 0 8px 8px;
}

.file-menu .row {
  width: 230px;
  margin-left: 7px;
}

.menu .rule {
  height: 2px;
  margin: 1px 17px 1px -10px;
  background: #c9c9cc;
}

.sub-menu {
  left: 285px;
  top: 106px;
  width: 276px;
  padding: 4px 0 16px 13px;
  border-radius: 6px;
}

.sub-menu .row {
  width: 217px;
  margin-left: 9px;
  padding-left: 3px;
}

.sub-menu kbd { width: 64px; }

/* new template dialog */
.dialog {
  position: absolute;
  left: 442px;
  right: 476px;
  top: 349px;
  bottom: 158px;
  display: flex;
  flex-direction: column;
  overflow: hidden;
  background: #f4f5f8;
  border: 2px solid #9a9a9c;
  border-radius: 10px;
}

.dialog-title {
  height: 37px;
  display: flex;
  align-items: center;
  justify-content: space-between;
  padding: 0 11px 3px 5px;
  background: linear-gradient(90deg, #f5f2ea, #fbf0ee 40%, #fbf0ec 60%, #f5f2ea);
}

.dialog-body {
  flex: 1;
  min-height: 0;
  display: flex;
  gap: 4px;
  padding: 18px 6px 0 20px;
}

.list {
  width: 206px;
  background: #fff;
  border: 1px solid #d4d4d8;
}

.list li {
  height: 23px;
  padding-left: 12px;
  line-height: 22px;
}

.list li:nth-child(even) { height: 22px; }

.list .on {
  color: #fff;
  background: #429cfa;
}

.pane {
  flex: 1;
  min-width: 0;
  display: flex;
  flex-direction: column;
}

.pane-top {
  display: flex;
  justify-content: space-between;
  align-items: flex-start;
  padding: 0 13px 0 11px;
}

.blank {
  width: 352px;
  height: 194px;
  display: flex;
  flex-direction: column;
  align-items: center;
  justify-content: center;
  gap: 15px;
  padding: 0 8px 4px 0;
  background: #fff;
  border: 3px solid #fd4244;
}

.blank svg {
  width: 36px;
  height: 34px;
  margin-left: 10px;
}

.toggle {
  display: flex;
  border: 1px solid #d4d4d8;
}

.toggle button {
  width: 104px;
  height: 28px;
  background: #fff;
}

.toggle .on {
  color: #fff;
  background: #429cfa;
}

.templates {
  flex: 1;
  min-width: 0;
  min-height: 0;
  display: flex;
  margin: 28px 0 0;
  padding: 9px 4px 1px;
  border: 2px solid #ebebed;
}

.templates legend {
  padding: 0 4px 0 3px;
  color: #0e9fe0;
}

.scroller {
  flex: 1;
  min-width: 0;
  display: grid;
  grid-template-columns: 1fr 15px;
  grid-template-rows: minmax(0, 1fr) 17px;
}

.viewport {
  overflow: hidden;
}

.viewport h3 {
  display: flex;
  align-items: center;
  gap: 5px;
  margin: 0;
  padding-left: 9px;
  font-size: 18px;
  font-weight: normal;
}

.viewport h3::after {
  content: "";
  flex: 1;
  height: 2px;
  background: #ebebed;
}

.cards {
  display: grid;
  grid-template-columns: repeat(3, 1fr);
  gap: 11px 10px;
  padding: 4px 0 6px 6px;
}

.card {
  height: 198px;
  display: flex;
  flex-direction: column;
  gap: 7px;
  padding: 8px 7px 9px;
  background: #fff;
}

.card.tall { padding-bottom: 6px; }

.card b {
  background: #ebf3fe;
  border: 2px solid #b0d5fc;
  border-radius: 4px;
}

.card .bar-cell {
  height: 16px;
  background: #f8fbff;
}

.card .main { background: #d7e9fe; }
.card .pale { background: #f8fbff; }

.cells {
  flex: 1;
  display: grid;
  gap: 7px;
}

.c1 { grid-template-columns: 242fr 86fr; }

.c2 { grid-template-columns: 231fr 96fr; }
.c2 .main { grid-row: span 2; }

.c3 {
  grid-template-columns: 1fr 1fr;
  grid-template-rows: 45fr 40fr 62fr;
}
.c3 b:nth-child(2) { grid-row: span 2; }
.c3 b:nth-child(4) { grid-column: span 2; }

.c4 { grid-template-columns: 1fr 1fr; }

.c5 { grid-template-columns: 77fr 251fr; }
.c5 .main { grid-row: span 3; }

.c6 {
  grid-template-columns: repeat(3, 1fr);
  grid-template-rows: 70fr 82fr;
}
.c6 .main { grid-column: span 3; }

.c7 { grid-template-columns: 251fr 77fr; }
.c8 { grid-template-columns: 100fr 71fr 71fr 71fr; }

.sv {
  padding: 2px 1px;
  background: #fff;
}

.sv div {
  width: 12px;
  height: 198px;
  border-radius: 6px;
  background: #e8e8e8;
}

.sh {
  padding: 2px 8px 0 0;
  background: #fff;
}

.sh div {
  height: 12px;
  border-radius: 6px;
  background: #e8e8e8;
}

.dialog-foot {
  height: 42px;
  display: flex;
  justify-content: flex-end;
  align-items: flex-start;
  gap: 17px;
  padding: 7px 18px 0 0;
}

.dialog-foot button {
  width: 66px;
  height: 29px;
  background: #fff;
  border: 1px solid #d4d4d8;
}

.dialog-foot .ok {
  width: 64px;
  height: 34px;
  padding-bottom: 5px;
  border: 3px solid #fd4244;
}

/* step badges */
.badge {
  position: absolute;
  width: 44px;
  height: 46px;
  border-radius: 50%;
  background: #fd4244;
  color: #fff;
  font: 34px/46px "Liberation Sans", sans-serif;
  text-align: center;
}

.b1 { left: 28px; top: 37px; }
.b2 { left: 115px; top: 146px; }
.b3 { left: 560px; top: 103px; }
.b4 { left: 1039px; top: 479px; }
.b5 { right: 649px; bottom: 155px; }

.bubble {
  position: absolute;
  right: -34px;
  bottom: 40px;
  width: 46px;
  height: 46px;
  border-radius: 50%;
  background: #2f8df5;
}
```
